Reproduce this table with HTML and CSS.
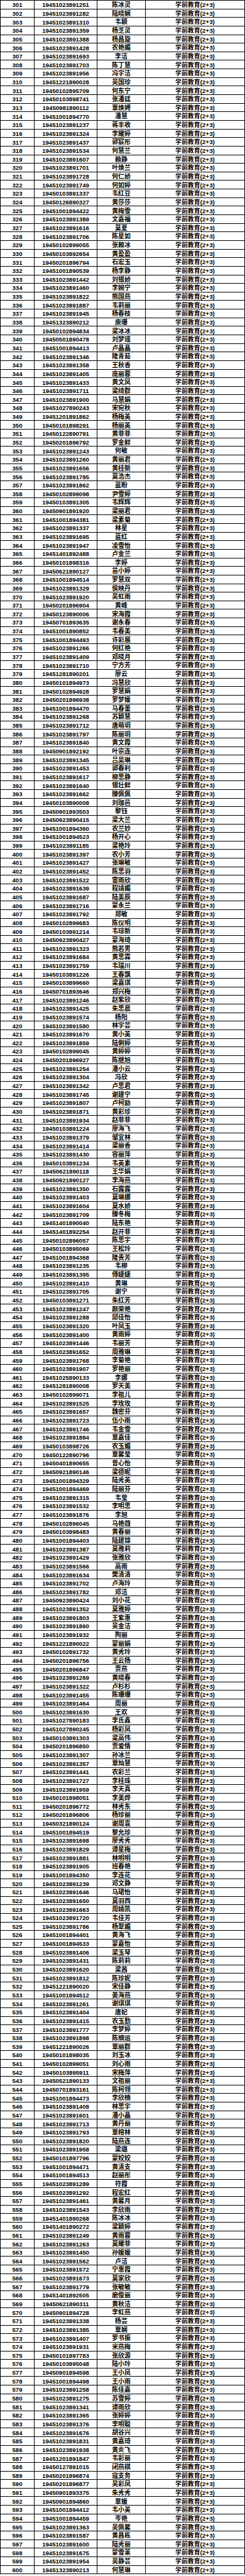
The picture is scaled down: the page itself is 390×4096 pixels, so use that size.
FILE: index.html
```html
<!DOCTYPE html>
<html lang="zh-CN">
<head>
<meta charset="utf-8">
<title>学前教育(2+3) 名单 301-600</title>
<link rel="stylesheet" href="styles.css">
</head>
<body>
<div class="sheet">
<div class="row"><span>301</span><span>19451023891251</span><span>陈冰灵</span><span>学前教育(2+3)</span></div>
<div class="row"><span>302</span><span>19451023891282</span><span>陆晓娴</span><span>学前教育(2+3)</span></div>
<div class="row"><span>303</span><span>19451023891310</span><span>韦颖</span><span>学前教育(2+3)</span></div>
<div class="row"><span>304</span><span>19451023891359</span><span>杨芝灵</span><span>学前教育(2+3)</span></div>
<div class="row"><span>305</span><span>19451023891388</span><span>杨昌旋</span><span>学前教育(2+3)</span></div>
<div class="row"><span>306</span><span>19451023891428</span><span>农艳媚</span><span>学前教育(2+3)</span></div>
<div class="row"><span>307</span><span>19451023891693</span><span>李洁</span><span>学前教育(2+3)</span></div>
<div class="row"><span>308</span><span>19451023891703</span><span>陈丁慧</span><span>学前教育(2+3)</span></div>
<div class="row"><span>309</span><span>19451023891956</span><span>冯宇洁</span><span>学前教育(2+3)</span></div>
<div class="row"><span>310</span><span>19451221890028</span><span>吴国珍</span><span>学前教育(2+3)</span></div>
<div class="row"><span>311</span><span>19450102895709</span><span>何东宁</span><span>学前教育(2+3)</span></div>
<div class="row"><span>312</span><span>19450103898741</span><span>张潘廷</span><span>学前教育(2+3)</span></div>
<div class="row"><span>313</span><span>19450981890112</span><span>覃焕娉</span><span>学前教育(2+3)</span></div>
<div class="row"><span>314</span><span>19451001894770</span><span>潘慧</span><span>学前教育(2+3)</span></div>
<div class="row"><span>315</span><span>19451023891237</span><span>蒋丰收</span><span>学前教育(2+3)</span></div>
<div class="row"><span>316</span><span>19451023891324</span><span>李耀婷</span><span>学前教育(2+3)</span></div>
<div class="row"><span>317</span><span>19451023891437</span><span>郭宸彤</span><span>学前教育(2+3)</span></div>
<div class="row"><span>318</span><span>19451023891534</span><span>何慧兰</span><span>学前教育(2+3)</span></div>
<div class="row"><span>319</span><span>19451023891607</span><span>赖静</span><span>学前教育(2+3)</span></div>
<div class="row"><span>320</span><span>19451023891701</span><span>叶焕兰</span><span>学前教育(2+3)</span></div>
<div class="row"><span>321</span><span>19451023891728</span><span>何仁娇</span><span>学前教育(2+3)</span></div>
<div class="row"><span>322</span><span>19451023891749</span><span>何如婷</span><span>学前教育(2+3)</span></div>
<div class="row"><span>323</span><span>19450103891337</span><span>韦红豆</span><span>学前教育(2+3)</span></div>
<div class="row"><span>324</span><span>19450126890327</span><span>黄莎莎</span><span>学前教育(2+3)</span></div>
<div class="row"><span>325</span><span>19451001894422</span><span>黄梅雪</span><span>学前教育(2+3)</span></div>
<div class="row"><span>326</span><span>19451023891389</span><span>文嘉福</span><span>学前教育(2+3)</span></div>
<div class="row"><span>327</span><span>19451023891616</span><span>莫夏</span><span>学前教育(2+3)</span></div>
<div class="row"><span>328</span><span>19451023891706</span><span>陈星如</span><span>学前教育(2+3)</span></div>
<div class="row"><span>329</span><span>19450102899055</span><span>张赖冰</span><span>学前教育(2+3)</span></div>
<div class="row"><span>330</span><span>19450103892654</span><span>黄盈盈</span><span>学前教育(2+3)</span></div>
<div class="row"><span>331</span><span>19450201896794</span><span>石宏玉</span><span>学前教育(2+3)</span></div>
<div class="row"><span>332</span><span>19451001890539</span><span>杨李静</span><span>学前教育(2+3)</span></div>
<div class="row"><span>333</span><span>19451023891442</span><span>刘银娇</span><span>学前教育(2+3)</span></div>
<div class="row"><span>334</span><span>19451023891460</span><span>李婉宁</span><span>学前教育(2+3)</span></div>
<div class="row"><span>335</span><span>19451023891822</span><span>熊国燕</span><span>学前教育(2+3)</span></div>
<div class="row"><span>336</span><span>19451023891887</span><span>韦莉丽</span><span>学前教育(2+3)</span></div>
<div class="row"><span>337</span><span>19451023891945</span><span>杨春枝</span><span>学前教育(2+3)</span></div>
<div class="row"><span>338</span><span>19451323890212</span><span>庾珊</span><span>学前教育(2+3)</span></div>
<div class="row"><span>339</span><span>19450102894834</span><span>梁冰冰</span><span>学前教育(2+3)</span></div>
<div class="row"><span>340</span><span>19450501890478</span><span>刘梦瑶</span><span>学前教育(2+3)</span></div>
<div class="row"><span>341</span><span>19451001894413</span><span>卢晶晶</span><span>学前教育(2+3)</span></div>
<div class="row"><span>342</span><span>19451023891346</span><span>隆青茹</span><span>学前教育(2+3)</span></div>
<div class="row"><span>343</span><span>19451023891358</span><span>王秋香</span><span>学前教育(2+3)</span></div>
<div class="row"><span>344</span><span>19451023891405</span><span>庞丽蓉</span><span>学前教育(2+3)</span></div>
<div class="row"><span>345</span><span>19451023891433</span><span>黄文凤</span><span>学前教育(2+3)</span></div>
<div class="row"><span>346</span><span>19451023891711</span><span>梁绮群</span><span>学前教育(2+3)</span></div>
<div class="row"><span>347</span><span>19451023891900</span><span>马慧娟</span><span>学前教育(2+3)</span></div>
<div class="row"><span>348</span><span>19451027890243</span><span>宋宛秋</span><span>学前教育(2+3)</span></div>
<div class="row"><span>349</span><span>19451201891862</span><span>杨梅英</span><span>学前教育(2+3)</span></div>
<div class="row"><span>350</span><span>19450101898291</span><span>杨丽英</span><span>学前教育(2+3)</span></div>
<div class="row"><span>351</span><span>19450122890791</span><span>黄菲菲</span><span>学前教育(2+3)</span></div>
<div class="row"><span>352</span><span>19450201896792</span><span>罗金鲜</span><span>学前教育(2+3)</span></div>
<div class="row"><span>353</span><span>19451023891243</span><span>何敏</span><span>学前教育(2+3)</span></div>
<div class="row"><span>354</span><span>19451023891260</span><span>黄丽君</span><span>学前教育(2+3)</span></div>
<div class="row"><span>355</span><span>19451023891656</span><span>黄桂新</span><span>学前教育(2+3)</span></div>
<div class="row"><span>356</span><span>19451023891785</span><span>莫浩杰</span><span>学前教育(2+3)</span></div>
<div class="row"><span>357</span><span>19451023891862</span><span>蓝盼</span><span>学前教育(2+3)</span></div>
<div class="row"><span>358</span><span>19450102899098</span><span>尹雪婷</span><span>学前教育(2+3)</span></div>
<div class="row"><span>359</span><span>19450103891305</span><span>韦辉辉</span><span>学前教育(2+3)</span></div>
<div class="row"><span>360</span><span>19450901891920</span><span>梁丽君</span><span>学前教育(2+3)</span></div>
<div class="row"><span>361</span><span>19451001894381</span><span>梁素菊</span><span>学前教育(2+3)</span></div>
<div class="row"><span>362</span><span>19451023891337</span><span>林星</span><span>学前教育(2+3)</span></div>
<div class="row"><span>363</span><span>19451023891695</span><span>蓝红</span><span>学前教育(2+3)</span></div>
<div class="row"><span>364</span><span>19451023891947</span><span>凌雪怡</span><span>学前教育(2+3)</span></div>
<div class="row"><span>365</span><span>19451401892488</span><span>卢金兰</span><span>学前教育(2+3)</span></div>
<div class="row"><span>366</span><span>19450101898316</span><span>李婷</span><span>学前教育(2+3)</span></div>
<div class="row"><span>367</span><span>19450621890127</span><span>苗小婷</span><span>学前教育(2+3)</span></div>
<div class="row"><span>368</span><span>19451001894514</span><span>罗慧双</span><span>学前教育(2+3)</span></div>
<div class="row"><span>369</span><span>19451023891329</span><span>侯映丹</span><span>学前教育(2+3)</span></div>
<div class="row"><span>370</span><span>19451023891920</span><span>吴虹雨</span><span>学前教育(2+3)</span></div>
<div class="row"><span>371</span><span>19450201896904</span><span>黄峰</span><span>学前教育(2+3)</span></div>
<div class="row"><span>372</span><span>19450123890006</span><span>宋海霞</span><span>学前教育(2+3)</span></div>
<div class="row"><span>373</span><span>19450701893635</span><span>谢永春</span><span>学前教育(2+3)</span></div>
<div class="row"><span>374</span><span>19451001890852</span><span>韦春美</span><span>学前教育(2+3)</span></div>
<div class="row"><span>375</span><span>19451001894493</span><span>许彩展</span><span>学前教育(2+3)</span></div>
<div class="row"><span>376</span><span>19451023891266</span><span>何红艳</span><span>学前教育(2+3)</span></div>
<div class="row"><span>377</span><span>19451023891409</span><span>邓晓月</span><span>学前教育(2+3)</span></div>
<div class="row"><span>378</span><span>19451023891710</span><span>宁方芳</span><span>学前教育(2+3)</span></div>
<div class="row"><span>379</span><span>19451281890201</span><span>廖云</span><span>学前教育(2+3)</span></div>
<div class="row"><span>380</span><span>19450101894973</span><span>冯慧欣</span><span>学前教育(2+3)</span></div>
<div class="row"><span>381</span><span>19450102894928</span><span>罗慧娟</span><span>学前教育(2+3)</span></div>
<div class="row"><span>382</span><span>19450201896938</span><span>罗梦媛</span><span>学前教育(2+3)</span></div>
<div class="row"><span>383</span><span>19451001894470</span><span>马春蕾</span><span>学前教育(2+3)</span></div>
<div class="row"><span>384</span><span>19451023891268</span><span>苏颖慧</span><span>学前教育(2+3)</span></div>
<div class="row"><span>385</span><span>19451023891712</span><span>唐萌玥</span><span>学前教育(2+3)</span></div>
<div class="row"><span>386</span><span>19451023891797</span><span>陈丽玥</span><span>学前教育(2+3)</span></div>
<div class="row"><span>387</span><span>19451023891840</span><span>黄文霞</span><span>学前教育(2+3)</span></div>
<div class="row"><span>388</span><span>19450901892192</span><span>叶宗连</span><span>学前教育(2+3)</span></div>
<div class="row"><span>389</span><span>19451023891345</span><span>吕昊琳</span><span>学前教育(2+3)</span></div>
<div class="row"><span>390</span><span>19451023891453</span><span>郭春利</span><span>学前教育(2+3)</span></div>
<div class="row"><span>391</span><span>19451023891617</span><span>柳思静</span><span>学前教育(2+3)</span></div>
<div class="row"><span>392</span><span>19451023891640</span><span>银壮鲜</span><span>学前教育(2+3)</span></div>
<div class="row"><span>393</span><span>19451023891662</span><span>滕佩佩</span><span>学前教育(2+3)</span></div>
<div class="row"><span>394</span><span>19450103890008</span><span>刘珈邑</span><span>学前教育(2+3)</span></div>
<div class="row"><span>395</span><span>19450901893503</span><span>黎钰</span><span>学前教育(2+3)</span></div>
<div class="row"><span>396</span><span>19450923890415</span><span>梁大兰</span><span>学前教育(2+3)</span></div>
<div class="row"><span>397</span><span>19451001894360</span><span>农兰妙</span><span>学前教育(2+3)</span></div>
<div class="row"><span>398</span><span>19451001894523</span><span>杨开心</span><span>学前教育(2+3)</span></div>
<div class="row"><span>399</span><span>19451023891185</span><span>梁艳玲</span><span>学前教育(2+3)</span></div>
<div class="row"><span>400</span><span>19451023891397</span><span>农小芳</span><span>学前教育(2+3)</span></div>
<div class="row"><span>401</span><span>19451023891427</span><span>张琳敏</span><span>学前教育(2+3)</span></div>
<div class="row"><span>402</span><span>19451023891452</span><span>陈思羽</span><span>学前教育(2+3)</span></div>
<div class="row"><span>403</span><span>19451023891522</span><span>雷雨欣</span><span>学前教育(2+3)</span></div>
<div class="row"><span>404</span><span>19451023891639</span><span>程靖媚</span><span>学前教育(2+3)</span></div>
<div class="row"><span>405</span><span>19451023891687</span><span>陆美辰</span><span>学前教育(2+3)</span></div>
<div class="row"><span>406</span><span>19451023891716</span><span>蒙永兰</span><span>学前教育(2+3)</span></div>
<div class="row"><span>407</span><span>19451023891792</span><span>郑敏</span><span>学前教育(2+3)</span></div>
<div class="row"><span>408</span><span>19450102899683</span><span>陈仪明</span><span>学前教育(2+3)</span></div>
<div class="row"><span>409</span><span>19450103891214</span><span>韦琼新</span><span>学前教育(2+3)</span></div>
<div class="row"><span>410</span><span>19450923890427</span><span>蒙海琦</span><span>学前教育(2+3)</span></div>
<div class="row"><span>411</span><span>19451023891323</span><span>熊若男</span><span>学前教育(2+3)</span></div>
<div class="row"><span>412</span><span>19451023891684</span><span>黄思霖</span><span>学前教育(2+3)</span></div>
<div class="row"><span>413</span><span>19451023891759</span><span>韦瑞川</span><span>学前教育(2+3)</span></div>
<div class="row"><span>414</span><span>19450103891226</span><span>王春飘</span><span>学前教育(2+3)</span></div>
<div class="row"><span>415</span><span>19450103899660</span><span>梁嘉琪</span><span>学前教育(2+3)</span></div>
<div class="row"><span>416</span><span>19450701893646</span><span>郑兴梅</span><span>学前教育(2+3)</span></div>
<div class="row"><span>417</span><span>19451023891246</span><span>赵紫欣</span><span>学前教育(2+3)</span></div>
<div class="row"><span>418</span><span>19451023891425</span><span>朱思晨</span><span>学前教育(2+3)</span></div>
<div class="row"><span>419</span><span>19451023891574</span><span>杨阳</span><span>学前教育(2+3)</span></div>
<div class="row"><span>420</span><span>19451023891580</span><span>林宇芸</span><span>学前教育(2+3)</span></div>
<div class="row"><span>421</span><span>19451023891670</span><span>黄小英</span><span>学前教育(2+3)</span></div>
<div class="row"><span>422</span><span>19451023891859</span><span>陆俐婷</span><span>学前教育(2+3)</span></div>
<div class="row"><span>423</span><span>19450102899045</span><span>黄婷婷</span><span>学前教育(2+3)</span></div>
<div class="row"><span>424</span><span>19450201896927</span><span>陈继旭</span><span>学前教育(2+3)</span></div>
<div class="row"><span>425</span><span>19451023891254</span><span>潘小云</span><span>学前教育(2+3)</span></div>
<div class="row"><span>426</span><span>19451023891304</span><span>冯欣</span><span>学前教育(2+3)</span></div>
<div class="row"><span>427</span><span>19451023891342</span><span>卢思君</span><span>学前教育(2+3)</span></div>
<div class="row"><span>428</span><span>19451023891745</span><span>谢建宁</span><span>学前教育(2+3)</span></div>
<div class="row"><span>429</span><span>19451023891807</span><span>卢柯励</span><span>学前教育(2+3)</span></div>
<div class="row"><span>430</span><span>19451023891871</span><span>黄彩珍</span><span>学前教育(2+3)</span></div>
<div class="row"><span>431</span><span>19451023891934</span><span>赵菲菲</span><span>学前教育(2+3)</span></div>
<div class="row"><span>432</span><span>19450103891224</span><span>廖海飞</span><span>学前教育(2+3)</span></div>
<div class="row"><span>433</span><span>19451023891379</span><span>邹宜林</span><span>学前教育(2+3)</span></div>
<div class="row"><span>434</span><span>19451023891414</span><span>梁丽香</span><span>学前教育(2+3)</span></div>
<div class="row"><span>435</span><span>19451023891430</span><span>容丽萍</span><span>学前教育(2+3)</span></div>
<div class="row"><span>436</span><span>19450103891234</span><span>韦英素</span><span>学前教育(2+3)</span></div>
<div class="row"><span>437</span><span>19450621890118</span><span>王华娟</span><span>学前教育(2+3)</span></div>
<div class="row"><span>438</span><span>19450921890127</span><span>李海燕</span><span>学前教育(2+3)</span></div>
<div class="row"><span>439</span><span>19451023891350</span><span>石露露</span><span>学前教育(2+3)</span></div>
<div class="row"><span>440</span><span>19451023891403</span><span>莫琳娜</span><span>学前教育(2+3)</span></div>
<div class="row"><span>441</span><span>19451023891604</span><span>莫水娇</span><span>学前教育(2+3)</span></div>
<div class="row"><span>442</span><span>19451023891709</span><span>滕冬梅</span><span>学前教育(2+3)</span></div>
<div class="row"><span>443</span><span>19451401890040</span><span>陆东艳</span><span>学前教育(2+3)</span></div>
<div class="row"><span>444</span><span>19451401892254</span><span>赵开菲</span><span>学前教育(2+3)</span></div>
<div class="row"><span>445</span><span>19450102896057</span><span>陈思宇</span><span>学前教育(2+3)</span></div>
<div class="row"><span>446</span><span>19450103895069</span><span>王松玲</span><span>学前教育(2+3)</span></div>
<div class="row"><span>447</span><span>19451001894368</span><span>隆贵芳</span><span>学前教育(2+3)</span></div>
<div class="row"><span>448</span><span>19451023891235</span><span>韦柳</span><span>学前教育(2+3)</span></div>
<div class="row"><span>449</span><span>19451023891395</span><span>傅婕婕</span><span>学前教育(2+3)</span></div>
<div class="row"><span>450</span><span>19451023891410</span><span>黄琳</span><span>学前教育(2+3)</span></div>
<div class="row"><span>451</span><span>19451023891705</span><span>谢宁</span><span>学前教育(2+3)</span></div>
<div class="row"><span>452</span><span>19450103891271</span><span>朱红芳</span><span>学前教育(2+3)</span></div>
<div class="row"><span>453</span><span>19451023891247</span><span>颜荣艳</span><span>学前教育(2+3)</span></div>
<div class="row"><span>454</span><span>19451023891288</span><span>邱佳怡</span><span>学前教育(2+3)</span></div>
<div class="row"><span>455</span><span>19451023891320</span><span>叶凤玉</span><span>学前教育(2+3)</span></div>
<div class="row"><span>456</span><span>19451023891400</span><span>黄雨婷</span><span>学前教育(2+3)</span></div>
<div class="row"><span>457</span><span>19451023891446</span><span>韦丽芳</span><span>学前教育(2+3)</span></div>
<div class="row"><span>458</span><span>19451023891652</span><span>周雅琳</span><span>学前教育(2+3)</span></div>
<div class="row"><span>459</span><span>19451023891768</span><span>李菊艳</span><span>学前教育(2+3)</span></div>
<div class="row"><span>460</span><span>19451023891907</span><span>罗艳丽</span><span>学前教育(2+3)</span></div>
<div class="row"><span>461</span><span>19451025890133</span><span>李娜</span><span>学前教育(2+3)</span></div>
<div class="row"><span>462</span><span>19451281890008</span><span>罗天美</span><span>学前教育(2+3)</span></div>
<div class="row"><span>463</span><span>19450102899071</span><span>李祖儿</span><span>学前教育(2+3)</span></div>
<div class="row"><span>464</span><span>19451023891525</span><span>李玫玫</span><span>学前教育(2+3)</span></div>
<div class="row"><span>465</span><span>19451023891657</span><span>魏密芬</span><span>学前教育(2+3)</span></div>
<div class="row"><span>466</span><span>19451023891723</span><span>伍小雨</span><span>学前教育(2+3)</span></div>
<div class="row"><span>467</span><span>19451023891746</span><span>韦金雪</span><span>学前教育(2+3)</span></div>
<div class="row"><span>468</span><span>19451023891884</span><span>覃嘉佳</span><span>学前教育(2+3)</span></div>
<div class="row"><span>469</span><span>19450103898726</span><span>农玉媚</span><span>学前教育(2+3)</span></div>
<div class="row"><span>470</span><span>19450122890796</span><span>覃馨莹</span><span>学前教育(2+3)</span></div>
<div class="row"><span>471</span><span>19450401890655</span><span>曾心怡</span><span>学前教育(2+3)</span></div>
<div class="row"><span>472</span><span>19450921890146</span><span>梁德昵</span><span>学前教育(2+3)</span></div>
<div class="row"><span>473</span><span>19451001894329</span><span>陆秀英</span><span>学前教育(2+3)</span></div>
<div class="row"><span>474</span><span>19451001894469</span><span>陆丽芬</span><span>学前教育(2+3)</span></div>
<div class="row"><span>475</span><span>19451023891315</span><span>韦莹</span><span>学前教育(2+3)</span></div>
<div class="row"><span>476</span><span>19451023891532</span><span>李明思</span><span>学前教育(2+3)</span></div>
<div class="row"><span>477</span><span>19451023891876</span><span>李旭</span><span>学前教育(2+3)</span></div>
<div class="row"><span>478</span><span>19450102896045</span><span>马艳薇</span><span>学前教育(2+3)</span></div>
<div class="row"><span>479</span><span>19450103898483</span><span>黄春丽</span><span>学前教育(2+3)</span></div>
<div class="row"><span>480</span><span>19451001894403</span><span>陆建锦</span><span>学前教育(2+3)</span></div>
<div class="row"><span>481</span><span>19451023891387</span><span>莫雅莉</span><span>学前教育(2+3)</span></div>
<div class="row"><span>482</span><span>19451023891429</span><span>张雅欣</span><span>学前教育(2+3)</span></div>
<div class="row"><span>483</span><span>19451023891566</span><span>高雨</span><span>学前教育(2+3)</span></div>
<div class="row"><span>484</span><span>19451023891634</span><span>樊清清</span><span>学前教育(2+3)</span></div>
<div class="row"><span>485</span><span>19451023891702</span><span>卢海玲</span><span>学前教育(2+3)</span></div>
<div class="row"><span>486</span><span>19451023891782</span><span>邓洁</span><span>学前教育(2+3)</span></div>
<div class="row"><span>487</span><span>19450923890424</span><span>刘小花</span><span>学前教育(2+3)</span></div>
<div class="row"><span>488</span><span>19451023891352</span><span>莫雅婷</span><span>学前教育(2+3)</span></div>
<div class="row"><span>489</span><span>19451023891803</span><span>王紫惠</span><span>学前教育(2+3)</span></div>
<div class="row"><span>490</span><span>19451023891860</span><span>吴金洁</span><span>学前教育(2+3)</span></div>
<div class="row"><span>491</span><span>19451023891932</span><span>陶丽</span><span>学前教育(2+3)</span></div>
<div class="row"><span>492</span><span>19451221890022</span><span>蒙丽娟</span><span>学前教育(2+3)</span></div>
<div class="row"><span>493</span><span>19450102891732</span><span>黄秀玲</span><span>学前教育(2+3)</span></div>
<div class="row"><span>494</span><span>19450201896756</span><span>王云扬</span><span>学前教育(2+3)</span></div>
<div class="row"><span>495</span><span>19450201896847</span><span>贾燕</span><span>学前教育(2+3)</span></div>
<div class="row"><span>496</span><span>19451023891269</span><span>黄晓春</span><span>学前教育(2+3)</span></div>
<div class="row"><span>497</span><span>19451023891322</span><span>卢杉杉</span><span>学前教育(2+3)</span></div>
<div class="row"><span>498</span><span>19451023891455</span><span>陈珊珊</span><span>学前教育(2+3)</span></div>
<div class="row"><span>499</span><span>19451023891464</span><span>周丽</span><span>学前教育(2+3)</span></div>
<div class="row"><span>500</span><span>19451023891630</span><span>王欢</span><span>学前教育(2+3)</span></div>
<div class="row"><span>501</span><span>19451027890183</span><span>李氏鑫</span><span>学前教育(2+3)</span></div>
<div class="row"><span>502</span><span>19451027890245</span><span>杨彩凤</span><span>学前教育(2+3)</span></div>
<div class="row"><span>503</span><span>19450103891303</span><span>梁高伟</span><span>学前教育(2+3)</span></div>
<div class="row"><span>504</span><span>19450201896850</span><span>贾爱情</span><span>学前教育(2+3)</span></div>
<div class="row"><span>505</span><span>19451023891307</span><span>孙冰兰</span><span>学前教育(2+3)</span></div>
<div class="row"><span>506</span><span>19451023891357</span><span>覃灿慧</span><span>学前教育(2+3)</span></div>
<div class="row"><span>507</span><span>19451023891441</span><span>农彩兰</span><span>学前教育(2+3)</span></div>
<div class="row"><span>508</span><span>19451023891727</span><span>李桂珠</span><span>学前教育(2+3)</span></div>
<div class="row"><span>509</span><span>19451023891959</span><span>李天真</span><span>学前教育(2+3)</span></div>
<div class="row"><span>510</span><span>19450101898051</span><span>李美烨</span><span>学前教育(2+3)</span></div>
<div class="row"><span>511</span><span>19450201896772</span><span>林秀东</span><span>学前教育(2+3)</span></div>
<div class="row"><span>512</span><span>19450201896806</span><span>杨珍丽</span><span>学前教育(2+3)</span></div>
<div class="row"><span>513</span><span>19450321890124</span><span>谢周袁</span><span>学前教育(2+3)</span></div>
<div class="row"><span>514</span><span>19451001894519</span><span>黎允珍</span><span>学前教育(2+3)</span></div>
<div class="row"><span>515</span><span>19451023891698</span><span>廖秀秀</span><span>学前教育(2+3)</span></div>
<div class="row"><span>516</span><span>19451023891829</span><span>谭星梅</span><span>学前教育(2+3)</span></div>
<div class="row"><span>517</span><span>19451023891881</span><span>林明明</span><span>学前教育(2+3)</span></div>
<div class="row"><span>518</span><span>19451023891905</span><span>班春艳</span><span>学前教育(2+3)</span></div>
<div class="row"><span>519</span><span>19451001894350</span><span>李连花</span><span>学前教育(2+3)</span></div>
<div class="row"><span>520</span><span>19451023891239</span><span>邓文静</span><span>学前教育(2+3)</span></div>
<div class="row"><span>521</span><span>19451023891646</span><span>马珺怡</span><span>学前教育(2+3)</span></div>
<div class="row"><span>522</span><span>19451023891650</span><span>莫羽西</span><span>学前教育(2+3)</span></div>
<div class="row"><span>523</span><span>19451023891663</span><span>周婧凯</span><span>学前教育(2+3)</span></div>
<div class="row"><span>524</span><span>19451023891720</span><span>韦佳芳</span><span>学前教育(2+3)</span></div>
<div class="row"><span>525</span><span>19451023891786</span><span>杨翠媚</span><span>学前教育(2+3)</span></div>
<div class="row"><span>526</span><span>19451001894401</span><span>黄海飞</span><span>学前教育(2+3)</span></div>
<div class="row"><span>527</span><span>19451001894533</span><span>蒙嘉怡</span><span>学前教育(2+3)</span></div>
<div class="row"><span>528</span><span>19451023891406</span><span>梁玉琴</span><span>学前教育(2+3)</span></div>
<div class="row"><span>529</span><span>19451023891431</span><span>陈莉莉</span><span>学前教育(2+3)</span></div>
<div class="row"><span>530</span><span>19451023891620</span><span>梁茜</span><span>学前教育(2+3)</span></div>
<div class="row"><span>531</span><span>19451023891812</span><span>陈珍妮</span><span>学前教育(2+3)</span></div>
<div class="row"><span>532</span><span>19451221890020</span><span>宋佳静</span><span>学前教育(2+3)</span></div>
<div class="row"><span>533</span><span>19451001894512</span><span>姜海燕</span><span>学前教育(2+3)</span></div>
<div class="row"><span>534</span><span>19451023891261</span><span>谢琪琪</span><span>学前教育(2+3)</span></div>
<div class="row"><span>535</span><span>19451023891404</span><span>唐妃</span><span>学前教育(2+3)</span></div>
<div class="row"><span>536</span><span>19451023891415</span><span>农玉勤</span><span>学前教育(2+3)</span></div>
<div class="row"><span>537</span><span>19451023891777</span><span>李梦婷</span><span>学前教育(2+3)</span></div>
<div class="row"><span>538</span><span>19451023891898</span><span>陈细运</span><span>学前教育(2+3)</span></div>
<div class="row"><span>539</span><span>19451221890026</span><span>覃丽群</span><span>学前教育(2+3)</span></div>
<div class="row"><span>540</span><span>19450101898035</span><span>刘玉冰</span><span>学前教育(2+3)</span></div>
<div class="row"><span>541</span><span>19450102899051</span><span>刘心雨</span><span>学前教育(2+3)</span></div>
<div class="row"><span>542</span><span>19450103895911</span><span>宋梅萍</span><span>学前教育(2+3)</span></div>
<div class="row"><span>543</span><span>19450521890133</span><span>文祖丽</span><span>学前教育(2+3)</span></div>
<div class="row"><span>544</span><span>19450701893161</span><span>陈柯翎</span><span>学前教育(2+3)</span></div>
<div class="row"><span>545</span><span>19451001894473</span><span>李欣楠</span><span>学前教育(2+3)</span></div>
<div class="row"><span>546</span><span>19451023891408</span><span>林思宇</span><span>学前教育(2+3)</span></div>
<div class="row"><span>547</span><span>19451023891601</span><span>潘小晶</span><span>学前教育(2+3)</span></div>
<div class="row"><span>548</span><span>19451023891713</span><span>黄丹丽</span><span>学前教育(2+3)</span></div>
<div class="row"><span>549</span><span>19451023891793</span><span>覃榕林</span><span>学前教育(2+3)</span></div>
<div class="row"><span>550</span><span>19451023891820</span><span>陆燕连</span><span>学前教育(2+3)</span></div>
<div class="row"><span>551</span><span>19451023891958</span><span>梁璐</span><span>学前教育(2+3)</span></div>
<div class="row"><span>552</span><span>19450101897796</span><span>蒙姣姣</span><span>学前教育(2+3)</span></div>
<div class="row"><span>553</span><span>19451001894471</span><span>黄清支</span><span>学前教育(2+3)</span></div>
<div class="row"><span>554</span><span>19451001894513</span><span>赵丽彤</span><span>学前教育(2+3)</span></div>
<div class="row"><span>555</span><span>19451023891289</span><span>符霞</span><span>学前教育(2+3)</span></div>
<div class="row"><span>556</span><span>19451023891292</span><span>程宏红</span><span>学前教育(2+3)</span></div>
<div class="row"><span>557</span><span>19451023891461</span><span>黄馨月</span><span>学前教育(2+3)</span></div>
<div class="row"><span>558</span><span>19451023891543</span><span>李欣雨</span><span>学前教育(2+3)</span></div>
<div class="row"><span>559</span><span>19451401890268</span><span>陈冰冰</span><span>学前教育(2+3)</span></div>
<div class="row"><span>560</span><span>19451401890272</span><span>梁颖婷</span><span>学前教育(2+3)</span></div>
<div class="row"><span>561</span><span>19451023891249</span><span>黄雨蓉</span><span>学前教育(2+3)</span></div>
<div class="row"><span>562</span><span>19451023891263</span><span>莫耀菲</span><span>学前教育(2+3)</span></div>
<div class="row"><span>563</span><span>19451023891450</span><span>孙媛媛</span><span>学前教育(2+3)</span></div>
<div class="row"><span>564</span><span>19451023891562</span><span>卢洁</span><span>学前教育(2+3)</span></div>
<div class="row"><span>565</span><span>19451023891572</span><span>宁惠霞</span><span>学前教育(2+3)</span></div>
<div class="row"><span>566</span><span>19451023891673</span><span>莫家欣</span><span>学前教育(2+3)</span></div>
<div class="row"><span>567</span><span>19451023891779</span><span>张敏敏</span><span>学前教育(2+3)</span></div>
<div class="row"><span>568</span><span>19451401892505</span><span>磨俊丽</span><span>学前教育(2+3)</span></div>
<div class="row"><span>569</span><span>19450621890311</span><span>黄秋洁</span><span>学前教育(2+3)</span></div>
<div class="row"><span>570</span><span>19450901894728</span><span>李虹燕</span><span>学前教育(2+3)</span></div>
<div class="row"><span>571</span><span>19451023891338</span><span>杨芸</span><span>学前教育(2+3)</span></div>
<div class="row"><span>572</span><span>19451023891385</span><span>覃娴</span><span>学前教育(2+3)</span></div>
<div class="row"><span>573</span><span>19451023891407</span><span>罗书振</span><span>学前教育(2+3)</span></div>
<div class="row"><span>574</span><span>19451023891931</span><span>米燕梅</span><span>学前教育(2+3)</span></div>
<div class="row"><span>575</span><span>19450101897783</span><span>张欣源</span><span>学前教育(2+3)</span></div>
<div class="row"><span>576</span><span>19450103895048</span><span>陆小玲</span><span>学前教育(2+3)</span></div>
<div class="row"><span>577</span><span>19450901894598</span><span>王小凤</span><span>学前教育(2+3)</span></div>
<div class="row"><span>578</span><span>19451001894498</span><span>王小雨</span><span>学前教育(2+3)</span></div>
<div class="row"><span>579</span><span>19451023891258</span><span>陈佳嘉</span><span>学前教育(2+3)</span></div>
<div class="row"><span>580</span><span>19451023891275</span><span>苏雪婷</span><span>学前教育(2+3)</span></div>
<div class="row"><span>581</span><span>19451023891341</span><span>谭雨欣</span><span>学前教育(2+3)</span></div>
<div class="row"><span>582</span><span>19451023891365</span><span>张婷婷</span><span>学前教育(2+3)</span></div>
<div class="row"><span>583</span><span>19451023891376</span><span>李明聪</span><span>学前教育(2+3)</span></div>
<div class="row"><span>584</span><span>19451023891676</span><span>胡谷兴</span><span>学前教育(2+3)</span></div>
<div class="row"><span>585</span><span>19451023891831</span><span>黄嘉琦</span><span>学前教育(2+3)</span></div>
<div class="row"><span>586</span><span>19451023891938</span><span>黄炎飞</span><span>学前教育(2+3)</span></div>
<div class="row"><span>587</span><span>19451201891847</span><span>韦彩丽</span><span>学前教育(2+3)</span></div>
<div class="row"><span>588</span><span>19450127891015</span><span>闭燕棋</span><span>学前教育(2+3)</span></div>
<div class="row"><span>589</span><span>19450201896874</span><span>寇支务</span><span>学前教育(2+3)</span></div>
<div class="row"><span>590</span><span>19450201896877</span><span>吴彩凤</span><span>学前教育(2+3)</span></div>
<div class="row"><span>591</span><span>19450901893375</span><span>朱秀秀</span><span>学前教育(2+3)</span></div>
<div class="row"><span>592</span><span>19450901894860</span><span>覃媛</span><span>学前教育(2+3)</span></div>
<div class="row"><span>593</span><span>19451001894412</span><span>韦小英</span><span>学前教育(2+3)</span></div>
<div class="row"><span>594</span><span>19451001894459</span><span>岑艳</span><span>学前教育(2+3)</span></div>
<div class="row"><span>595</span><span>19451023891363</span><span>吴佩馨</span><span>学前教育(2+3)</span></div>
<div class="row"><span>596</span><span>19451023891587</span><span>黄昌栋</span><span>学前教育(2+3)</span></div>
<div class="row"><span>597</span><span>19451023891600</span><span>陆秀丽</span><span>学前教育(2+3)</span></div>
<div class="row"><span>598</span><span>19451023891675</span><span>蒙雪莱</span><span>学前教育(2+3)</span></div>
<div class="row"><span>599</span><span>19451023891954</span><span>吴静芸</span><span>学前教育(2+3)</span></div>
<div class="row"><span>600</span><span>19451323890213</span><span>何慧琳</span><span>学前教育(2+3)</span></div>
</div>
</body>
</html>
```
FILE: styles.css
```css
html, body {
  margin: 0;
  padding: 0;
  background: #ffffff;
}

.sheet {
  display: flex;
  flex-direction: column;
  width: 390px;
  box-sizing: border-box;
  border-top: 1px solid #000;
  border-left: 1px solid #000;
  font-family: "Liberation Sans", "Noto Sans CJK SC", sans-serif;
  font-weight: 700;
  color: #000;
}

.row {
  display: grid;
  grid-template-columns: 54px 100px 77px 158px;
  height: 13.643px;
}

.row > span {
  display: flex;
  align-items: center;
  justify-content: center;
  box-sizing: border-box;
  border-right: 1px solid #000;
  border-bottom: 1px solid #000;
  padding-top: 1.6px;
  line-height: 1;
  white-space: nowrap;
  overflow: hidden;
}

.row > span:nth-child(1),
.row > span:nth-child(2) {
  font-size: 9.6px;
}

.row > span:nth-child(3),
.row > span:nth-child(4) {
  font-size: 9.9px;
}
```
